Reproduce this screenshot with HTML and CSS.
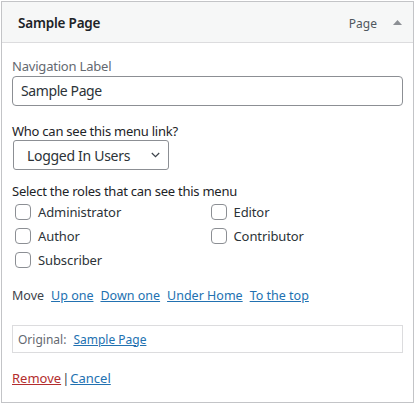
FILE: index.html
```html
<!DOCTYPE html>
<html>
<head>
<meta charset="utf-8">
<link rel="stylesheet" href="styles.css">
</head>
<body>
<div class="item">
  <div class="item-bar">
    <span class="item-title">Sample Page</span>
    <span class="item-type">Page</span>
    <svg class="toggle" width="9" height="5" viewBox="0 0 9 5"><path d="M0 5 L4.5 0 L9 5 Z" fill="#8c8f94"/></svg>
  </div>
  <div class="settings">
    <label class="field-label">Navigation Label</label>
    <div class="text-input">Sample Page</div>

    <div class="q-label">Who can see this menu link?</div>
    <div class="select">
      <span>Logged In Users</span>
      <svg class="chev" width="9" height="6" viewBox="0 0 9 6"><path d="M0.8 1 L4.5 4.7 L8.2 1" fill="none" stroke="#3c434a" stroke-width="1.2"/></svg>
    </div>

    <div class="roles-label">Select the roles that can see this menu</div>
    <div class="roles">
      <div class="role"><span class="cb"></span>Administrator</div>
      <div class="role"><span class="cb"></span>Editor</div>
      <div class="role"><span class="cb"></span>Author</div>
      <div class="role"><span class="cb"></span>Contributor</div>
      <div class="role"><span class="cb"></span>Subscriber</div>
    </div>

    <div class="move">
      <span class="move-label">Move</span>
      <a href="#">Up one</a>
      <a href="#">Down one</a>
      <a href="#">Under Home</a>
      <a href="#">To the top</a>
    </div>

    <div class="original">
      <span class="orig-label">Original:</span>
      <a href="#">Sample Page</a>
    </div>

    <div class="actions">
      <a href="#" class="remove">Remove</a><span class="sep">|</span><a href="#">Cancel</a>
    </div>
  </div>
</div>
</body>
</html>
```

FILE: styles.css
```css
html, body {
  margin: 0;
  padding: 0;
  background: #fff;
}
body {
  font-family: "Noto Sans", sans-serif;
  color: #1d2327;
  font-size: 13px;
}
.item {
  margin: 1px 0 0 1px;
  width: 411px;
  border: 1px solid #c3c4c7;
  height: 400px;
}
.item-bar {
  height: 40px;
  background: #f6f7f7;
  border-bottom: 1px solid #dcdcde;
  display: flex;
  align-items: center;
  padding: 0 11px 0 16px;
}
.item-title {
  font-size: 13.5px;
  font-weight: 600;
  letter-spacing: -0.2px;
  color: #1d2327;
  flex: 1;
  position: relative;
  top: 1px;
}
.item-type {
  font-size: 12px;
  color: #50575e;
  margin-right: 16px;
  position: relative;
  top: 1px;
}
.toggle {
  display: block;
  margin-top: 1px;
}
.settings {
  padding: 14px 10px 0 10px;
}
.field-label {
  display: block;
  line-height: 18px;
  color: #646970;
  font-size: 13px;
  letter-spacing: -0.2px;
}
.text-input {
  margin-top: 1px;
  height: 28px;
  border: 1px solid #8c8f94;
  border-radius: 4px;
  font-size: 14px;
  letter-spacing: -0.4px;
  line-height: 28px;
  padding-left: 8px;
  color: #2c3338;
}
.q-label {
  margin-top: 16px;
  line-height: 18px;
  font-size: 13px;
  letter-spacing: -0.25px;
  color: #1d2327;
}
.select {
  margin-left: 1px;
  height: 28px;
  border: 1px solid #8c8f94;
  border-radius: 3px;
  display: flex;
  align-items: center;
  justify-content: space-between;
  padding: 0 8px 0 13px;
  box-sizing: content-box;
  width: 133px;
  font-size: 14px;
  letter-spacing: -0.3px;
  color: #2c3338;
}
.chev { display: block; }
.roles-label {
  margin-top: 12px;
  line-height: 18px;
  font-size: 13px;
  letter-spacing: -0.25px;
  color: #1d2327;
}
.roles {
  display: grid;
  grid-template-columns: 1fr 1fr;
}
.role {
  height: 24px;
  display: flex;
  align-items: center;
  font-size: 13px;
  letter-spacing: -0.1px;
  color: #2c3338;
}
.cb {
  width: 14px;
  height: 14px;
  border: 1px solid #8c8f94;
  border-radius: 4px;
  margin: 0 7px 0 3px;
  background: #fff;
}
.move {
  margin-top: 15px;
  line-height: 18px;
  font-size: 12.5px;
  display: flex;
  gap: 7px;
  color: #3c434a;
}
a {
  color: #2271b1;
  text-decoration: underline;
}
.original {
  margin-top: 20px;
  height: 26px;
  border: 1px solid #dcdcde;
  display: flex;
  align-items: center;
  padding-left: 5px;
  font-size: 12px;
  gap: 7px;
}
.orig-label {
  color: #646970;
}
.actions {
  margin-top: 16px;
  line-height: 18px;
  font-size: 13px;
  color: #3c434a;
}
.remove {
  color: #b32d2e;
}
.sep {
  margin: 0 1px;
}
```
